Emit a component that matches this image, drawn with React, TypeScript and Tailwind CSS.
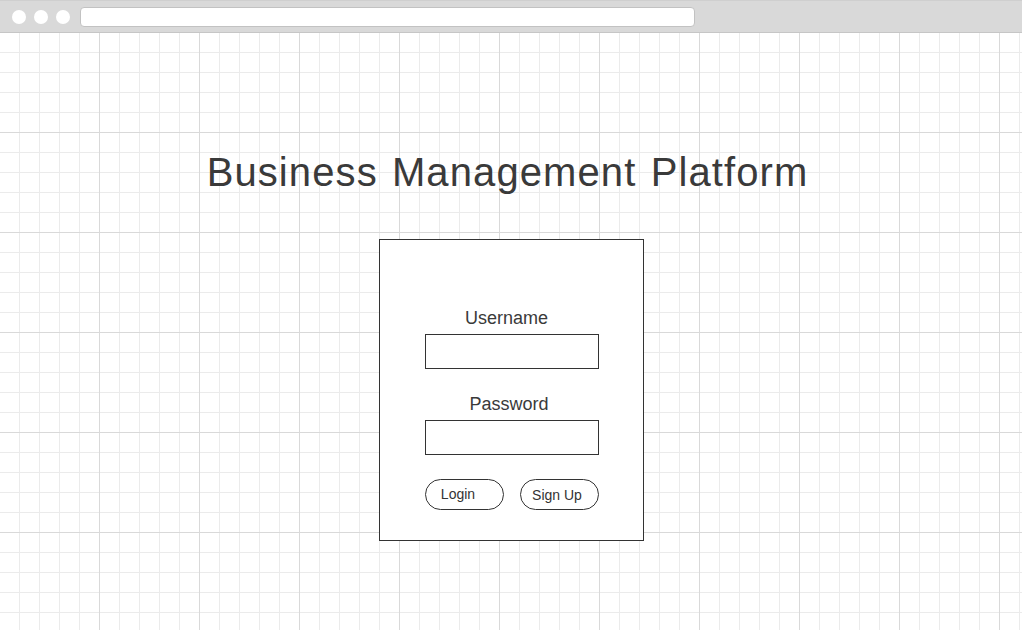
export default function App() {
  return (
    <div className="flex h-[630px] w-full flex-col overflow-hidden bg-white font-['Liberation_Sans',Arial,sans-serif] text-[#333]">
      <div className="flex h-[33px] shrink-0 items-center gap-[8px] border-b border-t border-[#c6c6c6] border-t-[#cfcfcf] bg-[#d9d9d9] pl-[12px]">
        <span className="h-[14px] w-[14px] rounded-full bg-white" />
        <span className="h-[14px] w-[14px] rounded-full bg-white" />
        <span className="h-[14px] w-[14px] rounded-full bg-white" />
        <div className="ml-[2px] h-[20px] w-[615px] rounded-[4px] border border-[#c2c2c2] bg-white" />
      </div>

      <div className="flex flex-1 flex-col items-center bg-white bg-[linear-gradient(to_right,#d9d9d9_1px,transparent_1px),linear-gradient(to_bottom,#d9d9d9_1px,transparent_1px),linear-gradient(to_right,#ebebeb_1px,transparent_1px),linear-gradient(to_bottom,#ebebeb_1px,transparent_1px)] bg-[size:100px_100px,100px_100px,20px_20px,20px_20px] bg-[position:99px_99px,99px_99px,19px_19px,19px_19px] pt-[115px]">
        <h1 className="-ml-[7px] text-[40px] leading-[48px] tracking-[1.1px] [word-spacing:2px] text-[#3a3a3a]">
          Business Management Platform
        </h1>

        <div className="mt-[43px] flex h-[302px] w-[265px] flex-col items-center border border-[#333] bg-white pl-[1px] pt-[69px]">
          <label className="text-[18px] leading-[18px] text-[#3a3a3a] -ml-[10px]">Username</label>
          <div className="mt-[7px] h-[35px] w-[174px] border border-[#333] bg-white" />

          <label className="mt-[26px] text-[18px] leading-[18px] text-[#3a3a3a] -ml-[5px]">Password</label>
          <div className="mt-[7px] h-[35px] w-[174px] border border-[#333] bg-white" />

          <div className="mt-[24px] flex w-[174px] justify-between">
            <button className="h-[31px] w-[79px] rounded-full border border-[#333] bg-white pr-[12px] text-[14px] text-[#333]">
              Login
            </button>
            <button className="h-[31px] w-[79px] rounded-full border border-[#333] bg-white pt-[2px] pr-[4px] text-[14px] text-[#333]">
              Sign Up
            </button>
          </div>
        </div>
      </div>
    </div>
  )
}
